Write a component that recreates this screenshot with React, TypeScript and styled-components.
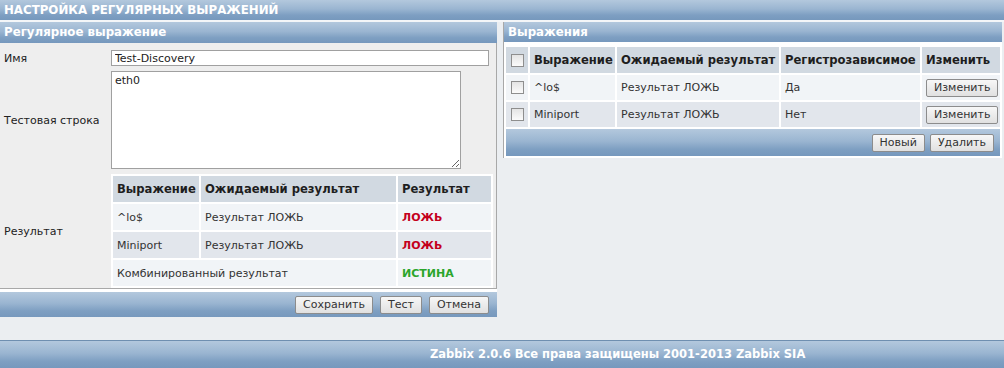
import React from 'react';
import styled, { createGlobalStyle } from 'styled-components';

const GlobalStyle = createGlobalStyle`
  html, body {
    margin: 0;
    padding: 0;
    background: #ebeef1;
  }
  body {
    font-family: 'DejaVu Sans', Verdana, sans-serif;
    font-size: 11px;
    color: #222;
  }
`;

const barGradient = `linear-gradient(to bottom, #b3c8dd 0%, #9ab5d1 45%, #7e9fc2 75%, #7698bd 100%)`;

const Page = styled.div`
  display: flex;
  flex-direction: column;
  min-height: 100vh;
`;

const TitleBar = styled.div`
  height: 20px;
  line-height: 20px;
  padding-left: 4px;
  background: ${barGradient};
  color: #fff;
  font-weight: bold;
  font-size: 11.8px;
  border-bottom: 2px solid #f4f6f8;
`;

const Columns = styled.div`
  display: grid;
  grid-template-columns: 497px 1fr;
  column-gap: 6px;
  padding-right: 2px;
  align-items: start;
`;

const Panel = styled.div`
  background: #fff;
`;

const PanelHeader = styled.div<{ $h: number }>`
  height: ${(p) => p.$h}px;
  line-height: ${(p) => p.$h}px;
  padding-left: 4px;
  background: ${barGradient};
  color: #fff;
  font-weight: bold;
  font-size: 11.8px;
`;

const FormBody = styled.div`
  background: #eeeeee;
  border-right: 1px solid #a8a8a8;
  border-bottom: 1px solid #a8a8a8;
  padding: 7px 0 0 0;
  display: grid;
  grid-template-columns: 111px 1fr;
  row-gap: 5px;
  align-items: center;
`;

const Label = styled.div`
  padding-left: 4px;
  color: #222;
`;

const TextInput = styled.input`
  box-sizing: border-box;
  width: 378px;
  height: 16px;
  margin: 0;
  padding: 0 3px;
  border: 1px solid #a0a0a0;
  background: #fff;
  font-family: inherit;
  font-size: 11px;
  color: #222;
  outline: none;
`;

const TextArea = styled.textarea`
  box-sizing: border-box;
  display: block;
  width: 350px;
  height: 98px;
  margin: 0;
  padding: 2px 3px;
  border: 1px solid #a0a0a0;
  background: #fff;
  font-family: inherit;
  font-size: 11px;
  color: #222;
  outline: none;
`;

const Table = styled.table<{ $w: number }>`
  width: ${(p) => p.$w}px;
  table-layout: fixed;
  background: #fff;
  border-collapse: separate;
  border-spacing: 2px;
`;

const Th = styled.th<{ $w?: number }>`
  box-sizing: border-box;
  width: ${(p) => (p.$w ? `${p.$w}px` : 'auto')};
  background: #d1d9e1;
  text-align: left;
  font-weight: bold;
  font-size: 11.6px;
  color: #1e1e1e;
  padding: 0 3px 0 4px;
  white-space: nowrap;
  overflow: hidden;
`;

const Td = styled.td<{ $dark?: boolean; $color?: string; $right?: boolean }>`
  background: ${(p) => (p.$dark ? '#e2e6ec' : '#f1f4f7')};
  padding: 0 4px;
  white-space: nowrap;
  overflow: hidden;
  text-align: ${(p) => (p.$right ? 'right' : 'left')};
  color: ${(p) => p.$color || '#333'};
  font-weight: ${(p) => (p.$color ? 'bold' : 'normal')};
`;

const Row = styled.tr<{ $h: number }>`
  height: ${(p) => p.$h}px;
`;

const ButtonBar = styled.div<{ $h: number; $gap: number; $inset?: boolean }>`
  height: ${(p) => p.$h}px;
  margin: ${(p) => (p.$inset ? '0 2px' : '3px 0 0 0')};
  background: ${barGradient};
  display: flex;
  justify-content: flex-end;
  align-items: center;
  gap: ${(p) => p.$gap}px;
  padding-right: ${(p) => (p.$inset ? 6 : 8)}px;
`;

const Button = styled.button`
  height: 18px;
  padding: 0 7px;
  border: 1px solid #8c8c8c;
  border-radius: 2px;
  background: linear-gradient(to bottom, #f7f7f7, #e0e0e0);
  font-family: inherit;
  font-size: 11px;
  color: #333;
  line-height: 16px;
  cursor: pointer;
`;

const RightPanel = styled(Panel)`
  border-left: 1px solid #a8a8a8;
`;

const RightBody = styled.div`
  width: 498px;
  padding: 3px 0 2px 0;
`;

const Check = styled.span`
  display: inline-block;
  width: 11px;
  height: 11px;
  border: 1px solid #8e8e8e;
  background: linear-gradient(to bottom, #e4e4e4, #fbfbfb);
  vertical-align: middle;
`;

const CheckCell = styled.div`
  display: flex;
  justify-content: center;
  align-items: center;
`;

const Footer = styled.div`
  margin-top: auto;
  height: 27px;
  line-height: 27px;
  background: ${barGradient};
  border-top: 1px solid #6f8fb0;
  color: #fff;
  font-weight: bold;
  font-size: 11.5px;
  padding-left: 430px;
`;

const FALSE_RED = '#c4001c';
const TRUE_GREEN = '#2ba52b';

const tests = [
  { expr: '^lo$', expect: 'Результат ЛОЖЬ', res: 'ЛОЖЬ' },
  { expr: 'Miniport', expect: 'Результат ЛОЖЬ', res: 'ЛОЖЬ' },
];

const expressions = [
  { expr: '^lo$', expect: 'Результат ЛОЖЬ', cs: 'Да' },
  { expr: 'Miniport', expect: 'Результат ЛОЖЬ', cs: 'Нет' },
];

const App: React.FC = () => {
  return (
    <Page>
      <GlobalStyle />
      <TitleBar>НАСТРОЙКА РЕГУЛЯРНЫХ ВЫРАЖЕНИЙ</TitleBar>
      <Columns>
        <Panel>
          <PanelHeader $h={21}>Регулярное выражение</PanelHeader>
          <FormBody>
            <Label>Имя</Label>
            <TextInput defaultValue="Test-Discovery" />
            <Label>Тестовая строка</Label>
            <TextArea defaultValue="eth0" />
            <Label>Результат</Label>
            <Table $w={382}>
              <tbody>
                <Row $h={26}>
                  <Th $w={86}>Выражение</Th>
                  <Th $w={195}>Ожидаемый результат</Th>
                  <Th>Результат</Th>
                </Row>
                {tests.map((t, i) => (
                  <Row $h={26} key={t.expr}>
                    <Td $dark={i % 2 === 1}>{t.expr}</Td>
                    <Td $dark={i % 2 === 1}>{t.expect}</Td>
                    <Td $dark={i % 2 === 1} $color={FALSE_RED}>{t.res}</Td>
                  </Row>
                ))}
                <Row $h={26}>
                  <Td colSpan={2}>Комбинированный результат</Td>
                  <Td $color={TRUE_GREEN}>ИСТИНА</Td>
                </Row>
              </tbody>
            </Table>
          </FormBody>
          <ButtonBar $h={25} $gap={7}>
            <Button>Сохранить</Button>
            <Button>Тест</Button>
            <Button>Отмена</Button>
          </ButtonBar>
        </Panel>

        <RightPanel>
          <PanelHeader $h={20}>Выражения</PanelHeader>
          <RightBody>
            <Table $w={498}>
              <tbody>
                <Row $h={26}>
                  <Th $w={22}>
                    <CheckCell>
                      <Check />
                    </CheckCell>
                  </Th>
                  <Th $w={85}>Выражение</Th>
                  <Th $w={162}>Ожидаемый результат</Th>
                  <Th $w={139}>Регистрозависимое</Th>
                  <Th>Изменить</Th>
                </Row>
                {expressions.map((e, i) => (
                  <Row $h={25} key={e.expr}>
                    <Td $dark={i % 2 === 1}>
                      <CheckCell>
                        <Check />
                      </CheckCell>
                    </Td>
                    <Td $dark={i % 2 === 1}>{e.expr}</Td>
                    <Td $dark={i % 2 === 1}>{e.expect}</Td>
                    <Td $dark={i % 2 === 1}>{e.cs}</Td>
                    <Td $dark={i % 2 === 1} $right>
                      <Button>Изменить</Button>
                    </Td>
                  </Row>
                ))}
              </tbody>
            </Table>
            <ButtonBar $h={27} $gap={5} $inset>
              <Button>Новый</Button>
              <Button>Удалить</Button>
            </ButtonBar>
          </RightBody>
        </RightPanel>
      </Columns>
      <Footer>Zabbix 2.0.6 Все права защищены 2001-2013 Zabbix SIA</Footer>
    </Page>
  );
};

export default App;
